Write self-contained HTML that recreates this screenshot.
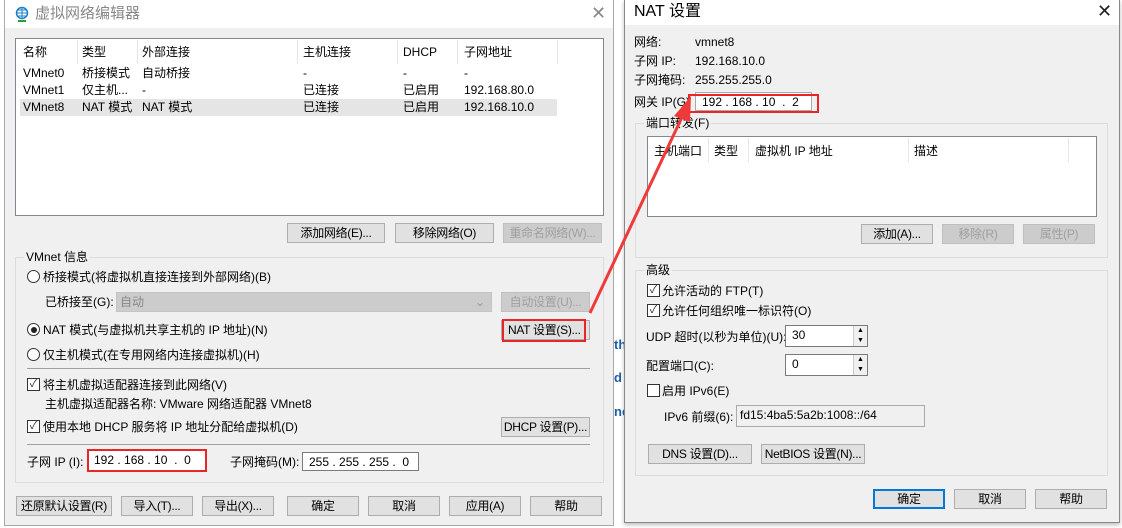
<!DOCTYPE html>
<html><head><meta charset="utf-8"><style>
*{box-sizing:border-box;margin:0;padding:0}
body{width:1122px;height:528px;background:#fff;position:relative;overflow:hidden;font-family:"Liberation Sans","Noto Sans CJK SC",sans-serif;font-size:12px;color:#000;line-height:14px}
.a{position:absolute;white-space:nowrap}
.btn{position:absolute;background:#e1e1e1;border:1px solid #adadad;text-align:center;line-height:18px;font-size:12px;white-space:nowrap;overflow:hidden;letter-spacing:-0.3px}
.dis{color:#a0a0a0;background:#ccc;border-color:#bfbfbf}
.grp{position:absolute;border:1px solid #dcdcdc}
.gl{position:absolute;background:#f0f0f0;padding:0 2px;top:-8px;left:8px;line-height:14px}
.rad{position:absolute;width:13px;height:13px;border:1px solid #333;border-radius:50%;background:#fff}
.chk{position:absolute;width:13px;height:13px;border:1px solid #333;background:#fff;font-size:11px;line-height:11px;text-align:center;color:#333}
.inp{position:absolute;background:#fff;border:1px solid #7a7a7a;line-height:18px;padding-left:6px;white-space:nowrap}
.red{position:absolute;border:2px solid #e8262a}
</style></head><body>
<!-- left dialog -->
<div class="a" style="left:4px;top:0;width:610px;height:526px;background:#f0f0f0;border:1px solid #aaa"></div>
<div class="a" style="left:5px;top:0;width:608px;height:28px;background:#fff"></div>
<svg class="a" style="left:15px;top:6px" width="14" height="16" viewBox="0 0 14 16"><circle cx="7" cy="7" r="5.5" fill="none" stroke="#1a7fc8" stroke-width="1.5"/><path d="M1.5 7h11M7 1.5v11M3 4h8M3 10h8" stroke="#1a7fc8" stroke-width="1"/><path d="M3 15h8" stroke="#2a9d3a" stroke-width="2"/></svg>
<div class="a" style="left:35px;top:6px;font-size:15px;line-height:16px;color:#888">虚拟网络编辑器</div>
<div class="a" style="left:591px;top:4px;font-size:18px;line-height:18px;color:#888">✕</div>

<div class="a" style="left:15px;top:38px;width:589px;height:178px;background:#fff;border:1px solid #828790"></div>
<div class="a" style="left:20px;top:99px;width:537px;height:17px;background:#e5e5e5"></div>
<div class="a" style="left:77px;top:40px;width:1px;height:24px;background:#e5e5e5"></div>
<div class="a" style="left:137px;top:40px;width:1px;height:24px;background:#e5e5e5"></div>
<div class="a" style="left:297px;top:40px;width:1px;height:24px;background:#e5e5e5"></div>
<div class="a" style="left:397px;top:40px;width:1px;height:24px;background:#e5e5e5"></div>
<div class="a" style="left:457px;top:40px;width:1px;height:24px;background:#e5e5e5"></div>
<div class="a" style="left:557px;top:40px;width:1px;height:24px;background:#e5e5e5"></div>
<div class="a" style="left:23px;top:45px">名称</div><div class="a" style="left:82px;top:45px">类型</div><div class="a" style="left:142px;top:45px">外部连接</div><div class="a" style="left:303px;top:45px">主机连接</div><div class="a" style="left:403px;top:45px">DHCP</div><div class="a" style="left:464px;top:45px">子网地址</div>
<div class="a" style="left:23px;top:66px">VMnet0</div><div class="a" style="left:82px;top:66px">桥接模式</div><div class="a" style="left:142px;top:66px">自动桥接</div><div class="a" style="left:303px;top:66px">-</div><div class="a" style="left:403px;top:66px">-</div><div class="a" style="left:464px;top:66px">-</div>
<div class="a" style="left:23px;top:83px">VMnet1</div><div class="a" style="left:82px;top:83px">仅主机...</div><div class="a" style="left:142px;top:83px">-</div><div class="a" style="left:303px;top:83px">已连接</div><div class="a" style="left:403px;top:83px">已启用</div><div class="a" style="left:464px;top:83px">192.168.80.0</div>
<div class="a" style="left:23px;top:100px">VMnet8</div><div class="a" style="left:82px;top:100px">NAT 模式</div><div class="a" style="left:142px;top:100px">NAT 模式</div><div class="a" style="left:303px;top:100px">已连接</div><div class="a" style="left:403px;top:100px">已启用</div><div class="a" style="left:464px;top:100px">192.168.10.0</div>

<div class="btn" style="left:287px;top:223px;width:98px;height:20px">添加网络(E)...</div>
<div class="btn" style="left:395px;top:223px;width:99px;height:20px">移除网络(O)</div>
<div class="btn dis" style="left:503px;top:223px;width:99px;height:20px">重命名网络(W)...</div>

<div class="grp" style="left:15px;top:257px;width:589px;height:226px"><div class="gl">VMnet 信息</div></div>
<div class="rad" style="left:27px;top:270px"></div><div class="a" style="left:43px;top:270px">桥接模式(将虚拟机直接连接到外部网络)(B)</div>
<div class="a" style="left:45px;top:295px">已桥接至(G):</div>
<div class="a" style="left:116px;top:292px;width:376px;height:20px;background:#ccc;border:1px solid #c4c4c4;color:#888;padding-left:3px;line-height:18px">自动<span style="position:absolute;right:6px;color:#999">⌄</span></div>
<div class="btn dis" style="left:501px;top:292px;width:89px;height:20px">自动设置(U)...</div>
<div class="rad" style="left:27px;top:323px"><div style="position:absolute;left:2.5px;top:2.5px;width:6px;height:6px;border-radius:50%;background:#222"></div></div><div class="a" style="left:43px;top:323px">NAT 模式(与虚拟机共享主机的 IP 地址)(N)</div>
<div class="btn" style="left:501px;top:320px;width:89px;height:20px;text-align:left;padding-left:6px">NAT 设置(S)...</div>
<div class="red" style="left:502px;top:319px;width:84px;height:23px"></div>
<div class="rad" style="left:27px;top:348px"></div><div class="a" style="left:43px;top:348px">仅主机模式(在专用网络内连接虚拟机)(H)</div>
<div class="a" style="left:27px;top:368px;width:563px;height:1px;background:#a0a0a0"></div>
<div class="chk" style="left:27px;top:378px">✓</div><div class="a" style="left:43px;top:378px">将主机虚拟适配器连接到此网络(V)</div>
<div class="a" style="left:45px;top:397px">主机虚拟适配器名称: VMware 网络适配器 VMnet8</div>
<div class="chk" style="left:27px;top:420px">✓</div><div class="a" style="left:43px;top:420px">使用本地 DHCP 服务将 IP 地址分配给虚拟机(D)</div>
<div class="btn" style="left:501px;top:417px;width:89px;height:20px">DHCP 设置(P)...</div>
<div class="a" style="left:27px;top:444px;width:563px;height:1px;background:#a0a0a0"></div>
<div class="a" style="left:27px;top:455px">子网 IP (I):</div>
<div class="inp" style="left:88px;top:451px;width:118px;height:20px;border:none">192 . 168 . 10 &nbsp;. &nbsp;0</div>
<div class="red" style="left:87px;top:449px;width:120px;height:23px"></div>
<div class="a" style="left:230px;top:455px">子网掩码(M):</div>
<div class="inp" style="left:302px;top:452px;width:117px;height:19px">255 . 255 . 255 . &nbsp;0</div>

<div class="btn" style="left:16px;top:496px;width:96px;height:20px">还原默认设置(R)</div>
<div class="btn" style="left:121px;top:496px;width:72px;height:20px">导入(T)...</div>
<div class="btn" style="left:202px;top:496px;width:72px;height:20px">导出(X)...</div>
<div class="btn" style="left:287px;top:496px;width:72px;height:20px">确定</div>
<div class="btn" style="left:368px;top:496px;width:72px;height:20px">取消</div>
<div class="btn" style="left:449px;top:496px;width:72px;height:20px">应用(A)</div>
<div class="btn" style="left:530px;top:496px;width:72px;height:20px">帮助</div>

<!-- background strip text -->
<div class="a" style="left:614px;top:338px;color:#1f5fa8;font-weight:bold;font-size:13px">th</div>
<div class="a" style="left:614px;top:371px;color:#1f5fa8;font-weight:bold;font-size:13px">d</div>
<div class="a" style="left:614px;top:405px;color:#1f5fa8;font-weight:bold;font-size:13px">ne</div>

<!-- right dialog -->
<div class="a" style="left:624px;top:0;width:496px;height:523px;background:#f0f0f0;border:1px solid #888;box-shadow:0 2px 4px rgba(0,0,0,.25)"></div>
<div class="a" style="left:625px;top:0;width:494px;height:25px;background:#fff"></div>
<div class="a" style="left:634px;top:3px;font-size:16px;line-height:18px">NAT 设置</div>
<div class="a" style="left:1097px;top:2px;font-size:18px;line-height:18px;color:#222">✕</div>
<div class="a" style="left:634px;top:35px">网络:</div><div class="a" style="left:695px;top:35px">vmnet8</div>
<div class="a" style="left:634px;top:54px">子网 IP:</div><div class="a" style="left:695px;top:54px">192.168.10.0</div>
<div class="a" style="left:634px;top:73px">子网掩码:</div><div class="a" style="left:695px;top:73px">255.255.255.0</div>
<div class="a" style="left:634px;top:95px">网关 IP(G)</div>
<div class="inp" style="left:695px;top:92px;width:117px;height:19px;border-color:#aaa">192 . 168 . 10 &nbsp;. &nbsp;2</div>
<div class="red" style="left:688px;top:94px;width:131px;height:19px"></div>

<div class="grp" style="left:635px;top:123px;width:473px;height:135px"><div class="gl">端口转发(F)</div></div>
<div class="a" style="left:647px;top:136px;width:450px;height:81px;background:#fff;border:1px solid #828790"></div>
<div class="a" style="left:708px;top:138px;width:1px;height:24px;background:#e5e5e5"></div>
<div class="a" style="left:748px;top:138px;width:1px;height:24px;background:#e5e5e5"></div>
<div class="a" style="left:908px;top:138px;width:1px;height:24px;background:#e5e5e5"></div>
<div class="a" style="left:1068px;top:138px;width:1px;height:24px;background:#e5e5e5"></div>
<div class="a" style="left:654px;top:144px">主机端口</div><div class="a" style="left:714px;top:144px">类型</div><div class="a" style="left:755px;top:144px">虚拟机 IP 地址</div><div class="a" style="left:914px;top:144px">描述</div>
<div class="btn" style="left:861px;top:224px;width:72px;height:20px">添加(A)...</div>
<div class="btn dis" style="left:942px;top:224px;width:72px;height:20px">移除(R)</div>
<div class="btn dis" style="left:1023px;top:224px;width:72px;height:20px">属性(P)</div>

<div class="grp" style="left:635px;top:270px;width:473px;height:206px"><div class="gl">高级</div></div>
<div class="chk" style="left:647px;top:284px">✓</div><div class="a" style="left:662px;top:284px">允许活动的 FTP(T)</div>
<div class="chk" style="left:647px;top:304px">✓</div><div class="a" style="left:662px;top:304px">允许任何组织唯一标识符(O)</div>
<div class="a" style="left:646px;top:330px">UDP 超时(以秒为单位)(U):</div>
<div class="inp" style="left:785px;top:325px;width:83px;height:22px;line-height:18px">30</div>
<div class="a" style="left:853px;top:326px;width:14px;height:20px;background:#f0f0f0;border-left:1px solid #ccc;font-size:7px;line-height:10px;text-align:center">▲<br>▼</div>
<div class="a" style="left:646px;top:359px">配置端口(C):</div>
<div class="inp" style="left:785px;top:354px;width:83px;height:22px">0</div>
<div class="a" style="left:853px;top:355px;width:14px;height:20px;background:#f0f0f0;border-left:1px solid #ccc;font-size:7px;line-height:10px;text-align:center">▲<br>▼</div>
<div class="chk" style="left:647px;top:384px"></div><div class="a" style="left:662px;top:384px">启用 IPv6(E)</div>
<div class="a" style="left:664px;top:410px">IPv6 前缀(6):</div>
<div class="inp" style="left:736px;top:405px;width:189px;height:22px;background:#f0f0f0;border-color:#aaa;padding-left:3px;line-height:18px">fd15:4ba5:5a2b:1008::/64</div>
<div class="btn" style="left:648px;top:444px;width:104px;height:20px">DNS 设置(D)...</div>
<div class="btn" style="left:761px;top:444px;width:104px;height:20px">NetBIOS 设置(N)...</div>
<div class="btn" style="left:873px;top:489px;width:72px;height:20px;border:2px solid #0078d7;line-height:16px">确定</div>
<div class="btn" style="left:954px;top:489px;width:72px;height:20px">取消</div>
<div class="btn" style="left:1035px;top:489px;width:72px;height:20px">帮助</div>

<!-- arrow -->
<svg class="a" style="left:0;top:0" width="1122" height="528"><line x1="590" y1="313" x2="683" y2="115" stroke="#f03a3a" stroke-width="3"/><polygon points="691,96 674,116 690,122" fill="#f03a3a"/></svg>
</body></html>
